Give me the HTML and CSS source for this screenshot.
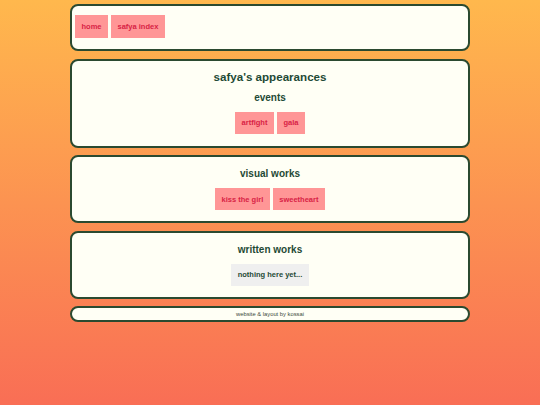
FILE: index.html
```html
<!DOCTYPE html>
<html>
<head>
<meta charset="utf-8">
<link rel="stylesheet" href="styles.css">
</head>
<body>
<div class="page">
  <nav class="box nav">
    <a class="btn">home</a>
    <a class="btn">safya index</a>
  </nav>
  <section class="box sec sec-first">
    <h1 class="title">safya's appearances</h1>
    <h2 class="sub">events</h2>
    <div class="row">
      <a class="btn">artfight</a>
      <a class="btn">gala</a>
    </div>
  </section>
  <section class="box sec">
    <h2 class="sub">visual works</h2>
    <div class="row">
      <a class="btn">kiss the girl</a>
      <a class="btn">sweetheart</a>
    </div>
  </section>
  <section class="box sec">
    <h2 class="sub">written works</h2>
    <div class="row">
      <span class="btn btn-empty">nothing here yet...</span>
    </div>
  </section>
  <footer class="box foot">website &amp; layout by kossai</footer>
</div>
</body>
</html>
```
FILE: styles.css
```css
html, body {
  margin: 0;
  padding: 0;
  height: 100%;
}
body {
  background: linear-gradient(to bottom, #ffb84d 0%, #f96e55 100%);
  font-family: "Liberation Sans", Arial, sans-serif;
  color: #1f4a35;
}
.page {
  width: 400px;
  margin: 0 auto;
  padding-top: 4px;
  display: flex;
  flex-direction: column;
  gap: 7.5px;
}
.box {
  background: #fffff5;
  border: 2px solid #2b4a30;
  border-radius: 8px;
  box-sizing: border-box;
}
.nav {
  display: flex;
  gap: 3px;
  padding: 9px 3px 11px;
}
.btn {
  display: inline-block;
  background: #ff9696;
  color: #d81f45;
  font-weight: bold;
  font-size: 7.5px;
  line-height: 9px;
  padding: 6.5px 6.5px;
}
.nav .btn {
  padding: 7px 6.5px;
}
.sec {
  padding: 10px 0 11px;
  text-align: center;
}
.sec-first {
  padding: 9px 0 12px;
}
.title {
  margin: 0;
  font-size: 11.6px;
  line-height: 14px;
}
.sub {
  margin: 0;
  font-size: 10px;
  line-height: 13px;
}
.sec-first .sub {
  margin-top: 7px;
}
.row {
  display: flex;
  justify-content: center;
  gap: 3px;
  margin-top: 8px;
}
.btn-empty {
  background: #efefef;
  color: #1f4a35;
}
.foot {
  font-size: 5.8px;
  line-height: 12px;
  text-align: center;
  color: #3b4a3b;
}
```
